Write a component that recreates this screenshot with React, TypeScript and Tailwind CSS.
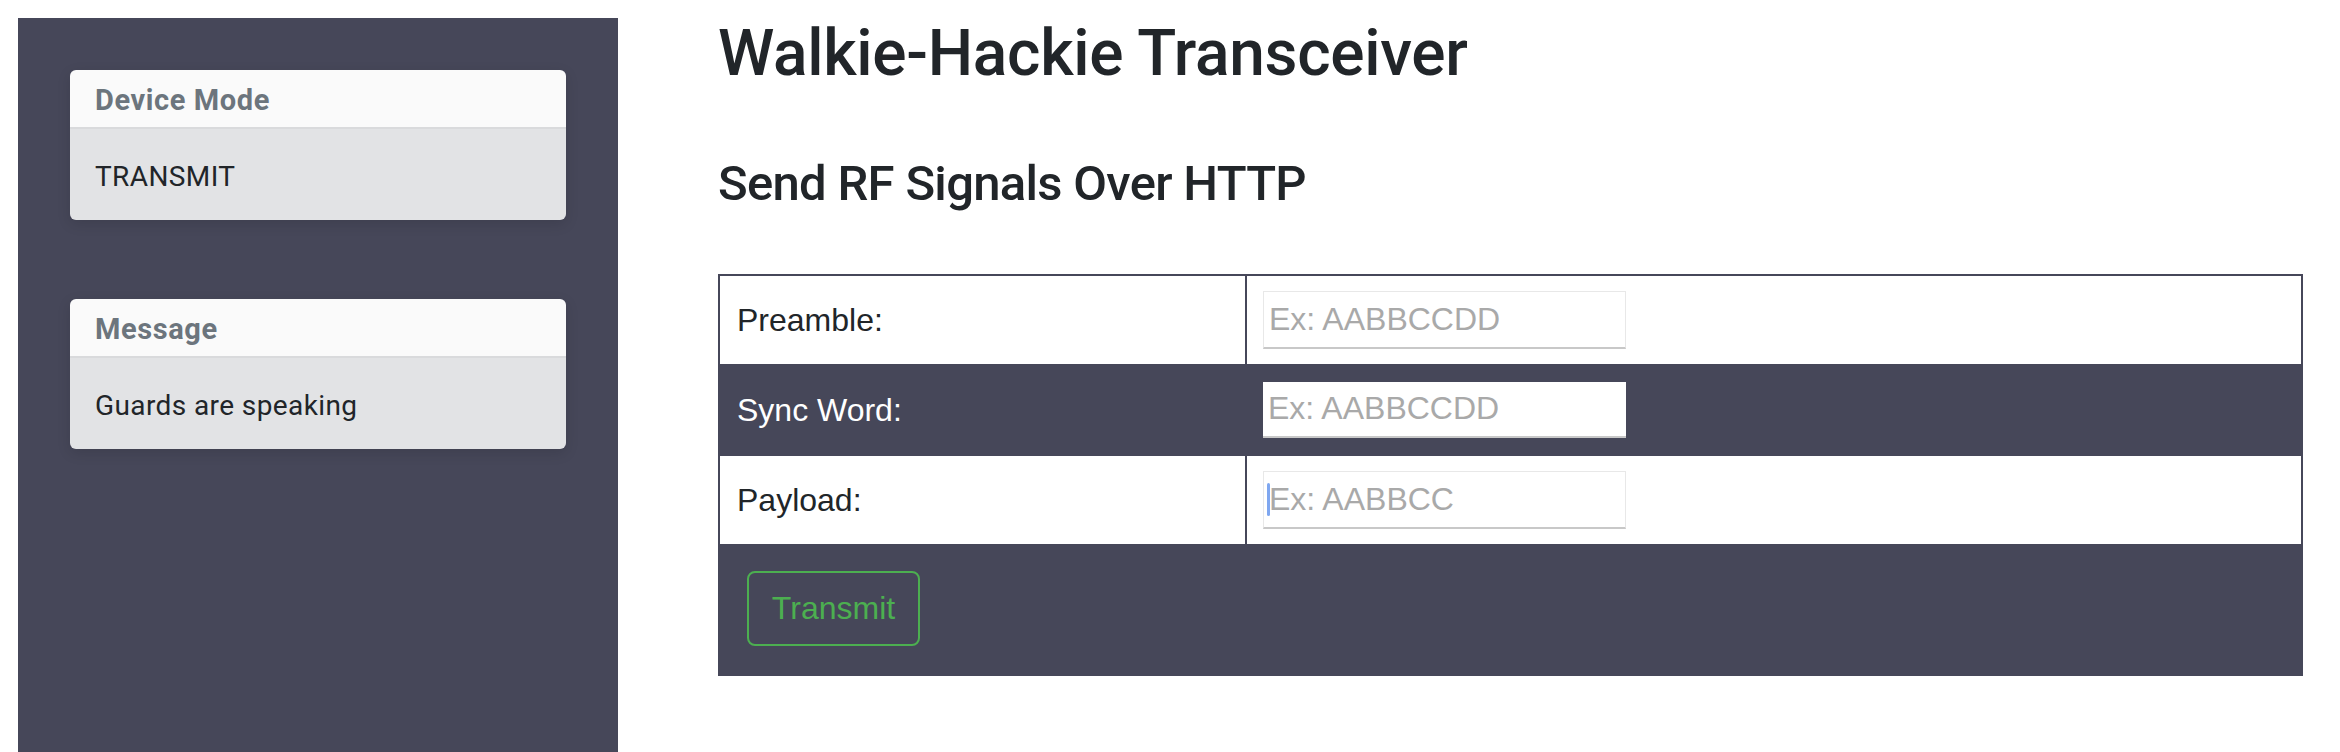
import { useState } from "react"

type Field = {
  label: string
  placeholder: string
  dark: boolean
}

const fields: Field[] = [
  { label: "Preamble:", placeholder: "Ex: AABBCCDD", dark: false },
  { label: "Sync Word:", placeholder: "Ex: AABBCCDD", dark: true },
  { label: "Payload:", placeholder: "Ex: AABBCC", dark: false },
]

function InfoCard({ title, body }: { title: string; body: string }) {
  return (
    <div className="w-[496px] rounded-[6px] overflow-hidden shadow-[0_4px_14px_rgba(0,0,0,0.12)]">
      <div className="h-[59px] flex items-center px-[25px] pt-[4px] bg-[#fafafa] border-b-2 border-[#d9dadc]">
        <span className="text-[29px] font-bold tracking-[0.6px] text-[#6c757d]">{title}</span>
      </div>
      <div className="h-[91px] flex items-center px-[25px] pt-[4px] bg-[#e2e3e5]">
        <span className="text-[28px] tracking-[0.4px] text-[#212529]">{body}</span>
      </div>
    </div>
  )
}

export default function App() {
  const [values, setValues] = useState<string[]>(["", "", ""])

  return (
    <div className="flex min-h-screen bg-white font-['Roboto',sans-serif]">
      {/* Sidebar */}
      <aside className="mt-[18px] ml-[18px] w-[600px] min-h-[734px] bg-[#464759] px-[52px] pt-[52px] flex flex-col gap-[79px]">
        <InfoCard title="Device Mode" body="TRANSMIT" />
        <InfoCard title="Message" body="Guards are speaking" />
      </aside>

      {/* Main */}
      <main className="flex-1 ml-[100px] mr-[37px] pt-[16px]">
        <h1 className="text-[64px] font-medium leading-[1.2] tracking-[-0.3px] text-[#212529]">Walkie-Hackie Transceiver</h1>
        <h3 className="mt-[62px] text-[49px] font-medium leading-[1.2] tracking-[-0.7px] text-[#212529]">Send RF Signals Over HTTP</h3>

        <div className="mt-[60px] border-2 border-[#464759] font-['Liberation_Sans',Arial,sans-serif]">
          {fields.map((f, i) => (
            <div
              key={f.label}
              className={
                f.dark
                  ? "grid grid-cols-[527px_1fr] h-[92px] bg-[#464759] text-white"
                  : "grid grid-cols-[527px_1fr] h-[88px] bg-white text-[#212529]"
              }
            >
              <div className="flex items-center pl-[17px] border-r-2 border-[#464759] text-[32px]">{f.label}</div>
              <div className="flex items-center pl-[16px]">
                <div className="relative">
                  <input
                    value={values[i]}
                    onChange={(e) => {
                      const next = [...values]
                      next[i] = e.target.value
                      setValues(next)
                    }}
                    placeholder={f.placeholder}
                    className={
                      f.dark
                        ? "w-[363px] h-[56px] px-[5px] bg-white border-b-2 border-[#c8c8c8] text-[32px] text-[#212529] placeholder:text-[#a9a9a9] outline-none"
                        : "w-[363px] h-[58px] px-[5px] bg-white border border-[#e8e8e8] border-b-2 border-b-[#c8c8c8] text-[32px] text-[#212529] placeholder:text-[#a9a9a9] outline-none"
                    }
                  />
                  {i === 2 && (
                    <span className="absolute left-[4px] top-[12px] w-[3px] h-[33px] rounded-full bg-[#7fa7f0]" />
                  )}
                </div>
              </div>
            </div>
          ))}
          <div className="h-[130px] bg-[#464759] pl-[27px] pt-[27px]">
            <button className="w-[173px] h-[75px] border-2 border-[#4caf50] rounded-[8px] text-[32px] text-[#4caf50]">
              Transmit
            </button>
          </div>
        </div>
      </main>
    </div>
  )
}
